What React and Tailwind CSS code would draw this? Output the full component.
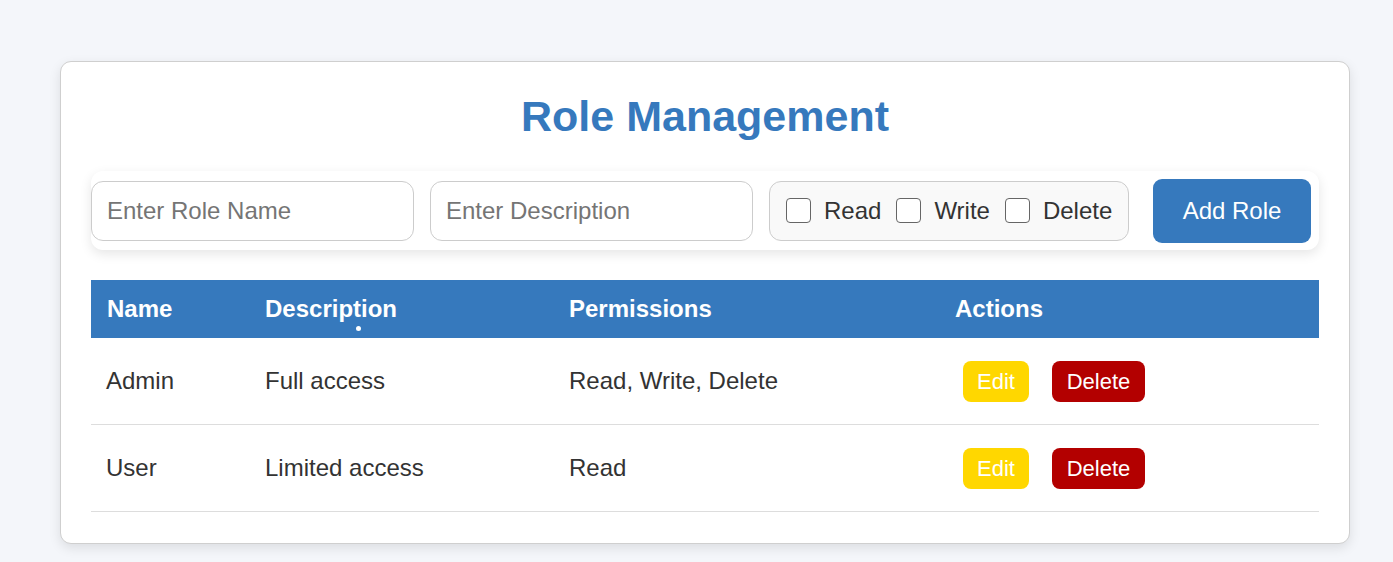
import React from 'react';

const roles = [
  { name: 'Admin', desc: 'Full access', perms: 'Read, Write, Delete' },
  { name: 'User', desc: 'Limited access', perms: 'Read' },
];

const perms = ['Read', 'Write', 'Delete'];

export default function App() {
  return (
    <div className="min-h-[562px] bg-[#f4f6fa] pt-[61px] px-[60px] font-['Liberation_Sans',Arial,sans-serif] text-[#333]">
      <div className="w-[1290px] rounded-[11px] border border-[#cfcfcf] bg-white px-[30px] pt-[30px] pb-[31px] shadow-[0_4px_12px_rgba(0,0,0,0.1)]">
        <h2 className="text-center text-[43px] font-bold leading-[1.15] text-[#3679bd] mb-[30px]">Role Management</h2>

        {/* form */}
        <div className="flex h-[79px] items-center rounded-[12px] bg-white shadow-[0_4px_12px_rgba(0,0,0,0.1)]">
          <input
            className="h-[60px] w-[323px] rounded-[12px] border border-[#ccc] px-[15px] text-[24px] placeholder:text-[#757575] outline-none"
            placeholder="Enter Role Name"
          />
          <input
            className="ml-[16px] h-[60px] w-[323px] rounded-[12px] border border-[#ccc] px-[15px] text-[24px] placeholder:text-[#757575] outline-none"
            placeholder="Enter Description"
          />
          <div className="ml-[16px] flex h-[60px] w-[360px] items-center rounded-[12px] border border-[#ccc] bg-[#f9f9f9] pl-[16px] text-[24px]">
            {perms.map((p) => (
              <label key={p} className="mr-[15px] flex items-center">
                <span className="h-[25px] w-[25px] rounded-[4px] border-[1.5px] border-[#666] bg-white"></span>
                <span className="ml-[13px]">{p}</span>
              </label>
            ))}
          </div>
          <button className="ml-[24px] h-[64px] w-[158px] rounded-[9px] bg-[#3679bd] text-[24px] text-white">Add Role</button>
        </div>

        {/* table */}
        <div className="mt-[30px]">
          <div className="grid h-[58px] grid-cols-[158px_304px_386px_1fr] items-center bg-[#3679bd] text-[24px] font-bold text-white">
            <div className="pl-[16px]">Name</div>
            <div className="relative pl-[16px]">
              Description
              <span className="absolute left-[107px] top-[35px] h-[5px] w-[5px] rounded-full bg-white"></span>
            </div>
            <div className="pl-[16px]">Permissions</div>
            <div className="pl-[16px]">Actions</div>
          </div>
          {roles.map((r) => (
            <div key={r.name} className="grid h-[87px] grid-cols-[158px_304px_386px_1fr] items-center border-b border-[#ddd] text-[24px]">
              <div className="pl-[15px]">{r.name}</div>
              <div className="pl-[16px]">{r.desc}</div>
              <div className="pl-[16px]">{r.perms}</div>
              <div className="flex items-center pl-[24px] pt-[1px]">
                <button className="h-[41px] w-[66px] rounded-[8px] bg-[#ffd700] text-[22px] text-white">Edit</button>
                <button className="ml-[23px] h-[41px] w-[93px] rounded-[8px] bg-[#b30000] text-[22px] text-white">Delete</button>
              </div>
            </div>
          ))}
        </div>
      </div>
    </div>
  );
}
